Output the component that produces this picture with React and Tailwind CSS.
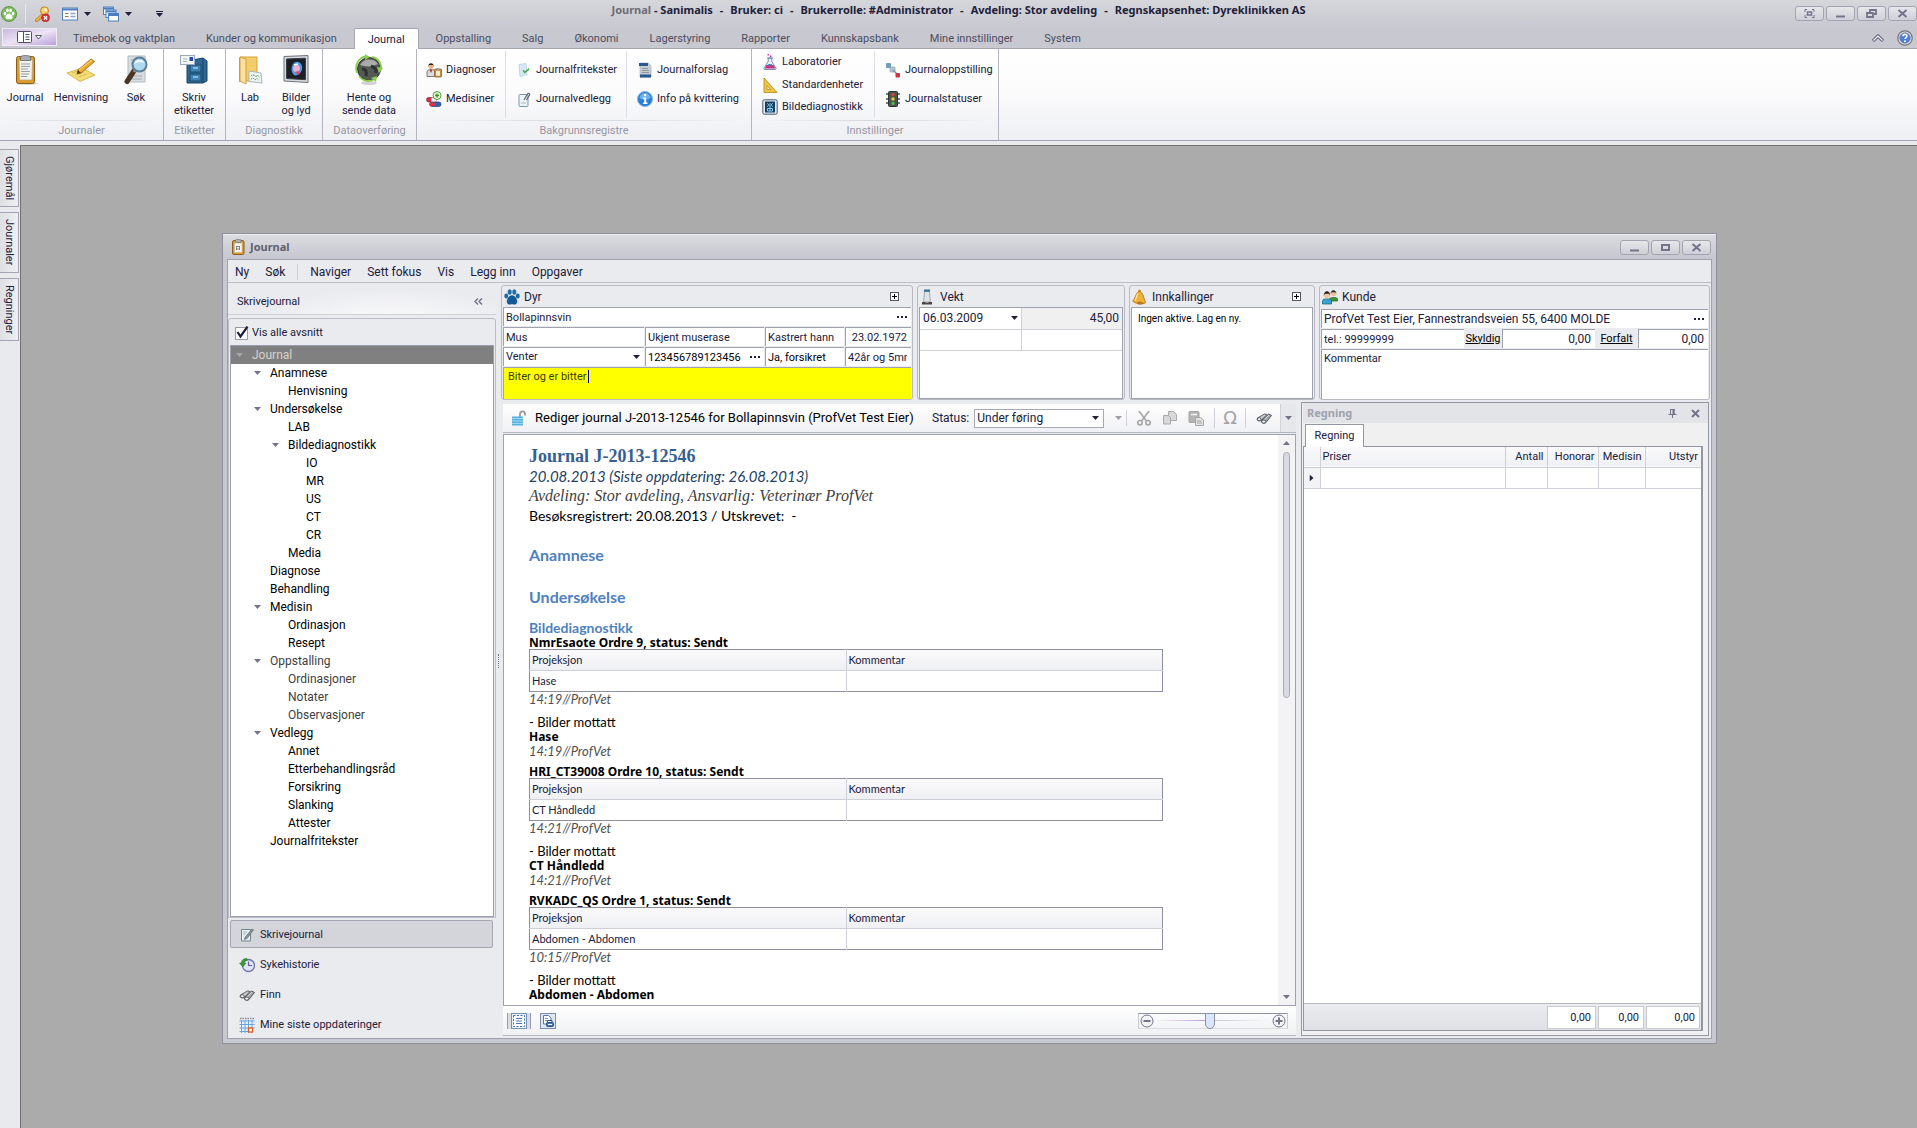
import { useState } from 'react'

const tabs = [
  'Timebok og vaktplan', 'Kunder og kommunikasjon', 'Journal', 'Oppstalling', 'Salg', 'Økonomi',
  'Lagerstyring', 'Rapporter', 'Kunnskapsbank', 'Mine innstillinger', 'System',
]

const titleParts = [
  'Bruker: ci', 'Brukerrolle: #Administrator', 'Avdeling: Stor avdeling', 'Regnskapsenhet: Dyreklinikken AS',
]

const tree = [
  { label: 'Anamnese', level: 1, open: true },
  { label: 'Henvisning', level: 2 },
  { label: 'Undersøkelse', level: 1, open: true },
  { label: 'LAB', level: 2 },
  { label: 'Bildediagnostikk', level: 2, open: true },
  { label: 'IO', level: 3 },
  { label: 'MR', level: 3 },
  { label: 'US', level: 3 },
  { label: 'CT', level: 3 },
  { label: 'CR', level: 3 },
  { label: 'Media', level: 2 },
  { label: 'Diagnose', level: 1 },
  { label: 'Behandling', level: 1 },
  { label: 'Medisin', level: 1, open: true },
  { label: 'Ordinasjon', level: 2 },
  { label: 'Resept', level: 2 },
  { label: 'Oppstalling', level: 1, open: true, dim: true },
  { label: 'Ordinasjoner', level: 2, dim: true },
  { label: 'Notater', level: 2, dim: true },
  { label: 'Observasjoner', level: 2, dim: true },
  { label: 'Vedlegg', level: 1, open: true },
  { label: 'Annet', level: 2 },
  { label: 'Etterbehandlingsråd', level: 2 },
  { label: 'Forsikring', level: 2 },
  { label: 'Slanking', level: 2 },
  { label: 'Attester', level: 2 },
  { label: 'Journalfritekster', level: 1 },
]

const indent = { 1: 'pl-[18px]', 2: 'pl-[36px]', 3: 'pl-[54px]' }

const orders = [
  { title: 'NmrEsaote Ordre 9, status: Sendt', projection: 'Hase', time: '14:19//ProfVet' },
  { title: 'HRI_CT39008 Ordre 10, status: Sendt', projection: 'CT Håndledd', time: '14:21//ProfVet' },
  { title: 'RVKADC_QS Ordre 1, status: Sendt', projection: 'Abdomen - Abdomen', time: '10:15//ProfVet', last: true },
]

const nav = [
  { label: 'Skrivejournal', icon: 'write' },
  { label: 'Sykehistorie', icon: 'history' },
  { label: 'Finn', icon: 'binoculars' },
  { label: 'Mine siste oppdateringer', icon: 'calendar' },
]

// 16x16 drawings
const small = {
  pawGreen: (
    <>
      <circle cx="8" cy="8" r="7.5" fill="#7dbb5e" stroke="#5c9a45" />
      <ellipse cx="3.9" cy="7.6" rx="1.3" ry="1.8" fill="#fff" />
      <ellipse cx="6.4" cy="4.4" rx="1.3" ry="1.9" fill="#fff" />
      <ellipse cx="9.6" cy="4.4" rx="1.3" ry="1.9" fill="#fff" />
      <ellipse cx="12.1" cy="7.6" rx="1.3" ry="1.8" fill="#fff" />
      <path d="M8 7.5c-2 0-3.6 2.5-3.6 4.1 0 2 2 1.6 3.6 1.6s3.6.4 3.6-1.6C11.6 10 10 7.5 8 7.5z" fill="#fff" />
    </>
  ),
  paw: (
    <g fill="#1c6fae" stroke="#0e4f86" strokeWidth=".4">
      <ellipse cx="2.3" cy="7" rx="1.8" ry="2.3" />
      <ellipse cx="5.7" cy="3" rx="1.8" ry="2.6" />
      <ellipse cx="10.3" cy="3" rx="1.8" ry="2.6" />
      <ellipse cx="13.7" cy="7" rx="1.8" ry="2.3" />
      <path d="M8 6.5c-2.800 0-5 3.500-5 6 0 3 2.800 3.300 5 2.300 2.200 1 5 .7 5-2.300 0-2.500-2.200-6-5-6z" fill="#0f5a97" />
    </g>
  ),
  key: (
    <>
      <path d="M9 7L1.5 13.5V15.500H4l.5-1.500H6v-2h1.500L10.500 9" fill="#f0b43c" stroke="#b97d1d" strokeWidth=".8" />
      <circle cx="10.5" cy="4.8" r="4" fill="#f8cd62" stroke="#c08425" />
      <circle cx="11.5" cy="3.8" r="1.3" fill="#fff" />
      <circle cx="11.5" cy="11.8" r="4" fill="#d8353b" stroke="#a51f27" strokeWidth=".6" />
      <path d="M9.900 10.200l3.200 3.200m0-3.200l-3.200 3.200" stroke="#fff" strokeWidth="1.4" />
    </>
  ),
  form: (
    <>
      <rect x=".5" y="2" width="15" height="12" fill="#fff" stroke="#4d80bd" />
      <path d="M1 3.500h14" stroke="#4d80bd" strokeWidth="2" />
      <path d="M3 7.500h3.500M3 10.500h3.500" stroke="#b36d2b" strokeWidth="1" />
      <path d="M8.500 7.500h5M8.500 10.500h5" stroke="#7ea8d6" strokeWidth="1.5" />
    </>
  ),
  windows: (
    <g fill="#fff" stroke="#4b7fc0">
      <rect x=".5" y="1" width="10" height="7.5" /><path d="M.5 2.500h10" strokeWidth="2" />
      <rect x="3" y="4" width="10" height="7.5" /><path d="M3 5.500h10" strokeWidth="2" />
      <rect x="5.5" y="7.5" width="10" height="7.5" /><path d="M5.500 9h10" strokeWidth="2" />
    </g>
  ),
  doctor: (
    <>
      <path d="M1 14.500V10c0-2 2-2.500 4-2.500s4 .5 4 2.500v4.500z" fill="#d9dde4" stroke="#6c5a52" strokeWidth=".8" />
      <path d="M3.500 8L5 11l1.500-3" fill="#c43b33" />
      <circle cx="5" cy="4.3" r="2.6" fill="#e7b48c" />
      <path d="M2.200 4.500C2 0 8 0 7.800 4.500L7 3H3z" fill="#2b2220" />
      <rect x="8.5" y="7" width="7" height="8" rx=".8" fill="#c98a35" stroke="#8b5a1a" strokeWidth=".7" />
      <rect x="10" y="8.8" width="4" height="5" fill="#f6ead2" />
      <rect x="10.5" y="6" width="3" height="2" fill="#a0a0a0" />
    </>
  ),
  pills: (
    <>
      <rect x=".5" y="6.5" width="10" height="4.5" rx="2.2" fill="#d43543" stroke="#7c1e2c" strokeWidth=".7" />
      <path d="M5.500 6.500h3a2.200 2.200 0 010 4.500h-3z" fill="#f4f4fa" />
      <rect x="4" y="11" width="11" height="4.5" rx="2.2" fill="#2d62b5" stroke="#1c3c7b" strokeWidth=".7" />
      <path d="M4.300 11.400h5v3.700h-3a2 2 0 01-2-3.700z" fill="#d43543" />
      <circle cx="11" cy="4.5" r="4" fill="#e9f7e2" stroke="#4f9e33" />
      <path d="M11 2.500v4M9 4.500h4" stroke="#3f8e24" strokeWidth="1.3" />
    </>
  ),
  freeText: (
    <>
      <path d="M3 2.500l7-1 1 11-7 2z" fill="#d8e8f2" stroke="#b3cfdf" strokeWidth=".8" />
      <path d="M6.500 8.500l2 3L13 8V6L8.800 9.500 8 8z" fill="#3fa546" />
    </>
  ),
  attach: (
    <>
      <rect x="3" y="3.5" width="9" height="12" rx="1" fill="#eef3f7" stroke="#7e99ab" />
      <path d="M8 9l3.500-6c.8-1.400 2.800-.4 2 1L10.500 9" fill="none" stroke="#5b6670" strokeWidth="1.2" />
      <path d="M5 12h5" stroke="#a9bac6" />
    </>
  ),
  proposal: (
    <>
      <path d="M3 1h8l3 3v11H3z" fill="#c7cdd4" stroke="#9aa4ae" strokeWidth=".6" />
      <path d="M2 1h9v3H2z" fill="#27588f" />
      <path d="M3 12.500h11v3H3z" fill="#27588f" />
      <path d="M5 6.500h6M5 8.500h7M5 10.500h7" stroke="#7c8793" strokeWidth=".8" />
    </>
  ),
  info: (
    <>
      <circle cx="8" cy="8" r="7.5" fill="#2b7fd4" stroke="#7db2ea" />
      <path d="M2.500 7a5.500 5 0 0111 0c-3 2-8 2-11 0z" fill="#6cb0f0" />
      <rect x="7" y="3" width="2.2" height="2.2" fill="#fff" />
      <path d="M6 6.500h3.200v5h1.300v1.500H6v-1.500h1.300V8H6z" fill="#fff" />
    </>
  ),
  flask: (
    <>
      <rect x="5.5" y="0" width="1.5" height="1.5" fill="#e238b2" />
      <rect x="8" y="1.5" width="1.5" height="1.5" fill="#b632cf" />
      <path d="M6.200 4v3.500L2 14c-.4.900 0 1.500 1 1.500h10c1 0 1.400-.6 1-1.500L9.800 7.500V4z" fill="#e7eef8" stroke="#6c83a8" strokeWidth=".9" />
      <path d="M4.500 11h7l1.900 3.500H2.800z" fill="#c3367f" />
      <path d="M6.500 10h3l1 1.500h-5z" fill="#3b8bd0" />
      <path d="M5.200 4h5.600" stroke="#6c83a8" />
    </>
  ),
  ruler: (
    <>
      <path d="M2 1v14.500h13z" fill="#efc644" stroke="#b98d1f" strokeWidth=".9" />
      <path d="M5 8.500V12.500h3.700z" fill="#fff8df" stroke="#b98d1f" strokeWidth=".8" />
    </>
  ),
  xray: (
    <>
      <rect x=".8" y=".8" width="14.4" height="14.4" rx="1.5" fill="#e4edf5" stroke="#44586c" />
      <rect x="3" y="2.5" width="10" height="11" fill="#143d62" />
      <path d="M5 4.500c2 0 2 3 0 3M11 4.500c-2 0-2 3 0 3M5.500 9.500h5v2.500h-5zM8 4v8" fill="none" stroke="#8fd0f2" />
    </>
  ),
  chain: (
    <>
      <rect x="1" y="1" width="5" height="5" rx="1" fill="#6f9fbd" />
      <rect x="5" y="5" width="5" height="5" rx="1" fill="#b4c9d6" stroke="#7996a8" strokeWidth=".6" />
      <path d="M8 8l4 4" stroke="#7c93a3" strokeWidth="1.5" />
      <rect x="10.5" y="11" width="4.5" height="4.5" rx="1" fill="#c93545" />
    </>
  ),
  traffic: (
    <>
      <rect x="3.5" y=".5" width="9" height="15" rx="1" fill="#4b5550" stroke="#2b332f" />
      <path d="M13 3h2M13 8h2M13 12h2M1 3h2M1 8h2M1 12h2" stroke="#4b5550" strokeWidth="1.5" />
      <circle cx="8" cy="3.6" r="1.7" fill="#e64034" />
      <circle cx="8" cy="8" r="1.7" fill="#e9c83a" />
      <circle cx="8" cy="12.4" r="1.7" fill="#48c04e" />
    </>
  ),
  clipboard: (
    <>
      <rect x="2.5" y="1.5" width="11.5" height="14" rx="1.5" fill="#d99a33" stroke="#8d5f18" />
      <rect x="4.5" y="4" width="7.5" height="9.5" fill="#f4f3ee" stroke="#b9b29b" strokeWidth=".5" />
      <path d="M6 7.500h4M6 10h4M6.500 7v4M9.500 7v4" stroke="#6b6f77" strokeWidth=".8" />
      <rect x="5.5" y=".5" width="5.5" height="3" rx="1" fill="#aab0b5" stroke="#6f7479" strokeWidth=".6" />
    </>
  ),
  weight: (
    <>
      <path d="M4.500 2.500h5l.8 10.500H3.700z" fill="#dfe4ea" stroke="#8d959e" strokeWidth=".8" />
      <rect x="4" y=".5" width="6" height="2.2" fill="#2e7596" />
      <path d="M2 13h10v2.500H2z" fill="#4d4743" />
      <path d="M5.500 13h3" stroke="#b9bec5" strokeWidth="1.5" />
    </>
  ),
  bell: (
    <>
      <circle cx="7.5" cy="2" r="1.5" fill="#d9921d" />
      <path d="M7.500 2.500c-4 1-3.500 6-6.800 9.500 1 2.500 11 4 13 1.500C11.500 10 12 4 7.500 2.500z" fill="#eeb23a" stroke="#a8690f" strokeWidth=".8" />
      <path d="M6 4.500C4.500 6 4.500 9 3 11.500" stroke="#fbe3a0" strokeWidth="1.4" fill="none" />
      <ellipse cx="8" cy="14" rx="3" ry="1.5" fill="#b87915" />
    </>
  ),
  people: (
    <>
      <path d="M8 12V9.500C8 8 15.500 8 15.500 10v2z" fill="#3e9a35" stroke="#1f5e1b" strokeWidth=".7" />
      <circle cx="11.5" cy="4.6" r="2.5" fill="#efbd95" />
      <path d="M8.700 5C8.400 0 14.600 0 14.300 5l-.8-1.700h-4z" fill="#2a201e" />
      <path d="M.5 15v-3c0-3 9-3 9 0v3z" fill="#36a4cf" stroke="#155f80" strokeWidth=".7" />
      <circle cx="5" cy="6.5" r="2.9" fill="#f4c69f" />
      <path d="M1.800 7C1.500.8 8.500.8 8.200 7l-1-2.200H2.800z" fill="#241b1a" />
    </>
  ),
  lock: (
    <>
      <path d="M9 7V4c0-3.600 5-3.600 5 0v1.500" fill="none" stroke="#9b9b98" strokeWidth="1.8" />
      <rect x="1" y="6.5" width="11" height="9" fill="#5ab3df" />
      <path d="M1 8.500h11M1 11h11M1 13.500h11" stroke="#9bd8f3" />
    </>
  ),
  cut: (
    <g fill="none" stroke="#a6a6a6" strokeWidth="1.6">
      <path d="M3 1l7.500 10M13 1L5.500 11" />
      <circle cx="4" cy="12.7" r="2.2" />
      <circle cx="12" cy="12.7" r="2.2" />
    </g>
  ),
  copy: (
    <g fill="#d8d8d8" stroke="#a9a9a9">
      <path d="M6.500 1.500h5l3 3v6h-8z" />
      <path d="M1.500 5.500h5l2 2v6.500h-7z" />
    </g>
  ),
  paste: (
    <g stroke="#a3a3a3">
      <rect x="1" y="1.5" width="10" height="11" rx="1" fill="#b5b5b5" />
      <path d="M3 4.500h6" stroke="#f1f1f1" strokeWidth="1.5" />
      <path d="M7.500 7.500h5l3 2.500v5.500h-8z" fill="#e2e2e2" />
      <path d="M9 11h4M9 13h5" />
    </g>
  ),
  binoculars: (
    <g stroke="#3f4347" strokeWidth=".8">
      <path d="M1.500 8L8.500 4l2.500.500L5.500 10C3 12 0 10.500 1.500 8z" fill="#c9cdd1" />
      <path d="M5.500 10.500L12.500 4l3 1.500-5.500 7C8 14 4.500 13 5.500 10.500z" fill="#9da3a8" />
      <ellipse cx="3.2" cy="9.2" rx="1.9" ry="1.5" fill="#eef0f2" />
      <ellipse cx="7.8" cy="11.6" rx="2" ry="1.6" fill="#eef0f2" />
      <path d="M8.500 9.500l4.500-4.500" stroke="#e7eaec" />
    </g>
  ),
  write: (
    <>
      <path d="M2.500 2.500h9v11.500h-9z" fill="#e6eff4" stroke="#6f8593" />
      <path d="M6 10.500L13 2l1.500.800L8 11.500 5.500 12.500z" fill="#8c969d" stroke="#59636a" strokeWidth=".7" />
      <path d="M4 5h4M4 7h3" stroke="#a7bcc8" />
    </>
  ),
  history: (
    <>
      <circle cx="9.5" cy="8.5" r="6" fill="#dfe3f8" stroke="#6d72ad" strokeWidth="1.3" />
      <path d="M9.500 4.500v4h3.500" fill="none" stroke="#5b5f9c" strokeWidth="1.2" />
      <path d="M8 1.500C4 1.500 2.500 3.500 2.500 6H.5l3.300 4L7 6H5c0-1.500 1-2.500 3-2.500z" fill="#3f9b35" stroke="#226b1c" strokeWidth=".5" />
    </>
  ),
  calendar: (
    <>
      <rect x="1" y="3" width="13" height="12" fill="#eaf3fb" />
      <path d="M1 1.500h14.500" stroke="#888e96" strokeWidth="1.5" strokeDasharray="1.5 1" />
      <path d="M.5 4h15M.5 7.500h15M.5 11h15M.5 14.500h13M2.500 3v13M6 3v13M9.500 3v13M13 3v13" stroke="#6aa2dc" />
      <rect x="9.5" y="11" width="4" height="4" fill="#fff" stroke="#dd5a23" strokeWidth="1.3" />
    </>
  ),
  pageView: (
    <>
      <rect x=".5" y=".5" width="15" height="15" fill="#eaf2fb" stroke="#7390b5" />
      <rect x="2.5" y="2.5" width="11" height="11" fill="#fff" stroke="#3e6ea8" strokeDasharray="2 1.5" />
      <path d="M5 5.500h6M5 8h6M5 10.500h6" stroke="#4878b4" />
    </>
  ),
  printView: (
    <>
      <rect x=".5" y=".5" width="15" height="15" fill="#dfe8f2" stroke="#7c8fa9" />
      <path d="M3.500 2.500h5l2.500 2.500v6h-7.500z" fill="#fff" stroke="#4a7ab5" />
      <path d="M5 5.500h3M5 7.500h4" stroke="#6f9acb" />
      <path d="M7.500 9.500v-2h4.500v2" fill="#fff" stroke="#264f86" />
      <rect x="6.500" y="9.5" width="7" height="4" rx="1" fill="#4779b7" stroke="#264f86" />
      <path d="M8 11.500h4" stroke="#fff" />
    </>
  ),
  help: (
    <>
      <circle cx="8" cy="8" r="7.2" fill="#e9e9ec" stroke="#71727a" strokeWidth="1.2" />
      <circle cx="8" cy="8" r="5.3" fill="#4a7fe0" stroke="#7b8495" strokeWidth=".8" />
      <path d="M6 6.300c0-2.600 4-2.500 4-.2 0 1.500-2 1.500-2 3" fill="none" stroke="#fff" strokeWidth="1.6" />
      <circle cx="8" cy="11.3" r="1" fill="#fff" />
    </>
  ),
}

// 32x32 drawings
const large = {
  journal: (
    <>
      <ellipse cx="18" cy="29.5" rx="11" ry="1.5" fill="#d5d5da" />
      <rect x="7.5" y="2.5" width="18" height="27" rx="2" fill="#d99a2e" stroke="#8c5d16" />
      <path d="M10 6h13.500l-.5 20H10.500z" fill="#f1f1ee" stroke="#b7a57a" strokeWidth=".7" />
      <path d="M12 10h9M12 12.500h9M12 15h7M12 17.500h9M12 20h8M12 22.500h6" stroke="#9a9da3" />
      <path d="M11.500 3c0-2 10-2 10 0v3.500h-10z" fill="#a9adb1" stroke="#66696d" strokeWidth=".8" />
    </>
  ),
  referral: (
    <>
      <path d="M2 19l15-5 13 7-15 6.500z" fill="#f4dd76" stroke="#cfae3c" strokeWidth=".8" />
      <path d="M7 19l9-3M10 21l9-3M13 23l9-3" stroke="#d7bd55" />
      <path d="M12 20l1-4L26 5l3.500 2.500L16 19z" fill="#f0ab2e" stroke="#a86c12" strokeWidth=".9" />
      <path d="M12 20l1-4 3 3z" fill="#4d3a23" />
      <path d="M14 16L27 6" stroke="#fbdc8a" />
    </>
  ),
  search: (
    <>
      <path d="M8 2h17v26H8z" fill="#d9dde2" stroke="#b5bac1" />
      <path d="M11 6h11M11 9h11M11 22h11M11 25h11" stroke="#b5bac1" strokeWidth="1.5" />
      <path d="M14 17L7 27.500" stroke="#4c3424" strokeWidth="5" strokeLinecap="round" />
      <path d="M16 15l-2 3" stroke="#8e8e90" strokeWidth="3" />
      <circle cx="19.5" cy="10.5" r="7" fill="#a9d8f3" fillOpacity=".9" stroke="#5d7f98" strokeWidth="2" />
      <path d="M14.500 10c0-5 8-6 10-1-3-1-7-1-10 1z" fill="#eef9ff" />
    </>
  ),
  labels: (
    <>
      <path d="M9 7l16-3 4 3v20l-4 2H9z" fill="#2d6794" stroke="#1c4464" />
      <path d="M25 4v25" stroke="#1c4464" />
      <rect x="12" y="11" width="11" height="7" fill="#3d82b3" stroke="#1d4a6e" />
      <rect x="12" y="20" width="11" height="7" fill="#3d82b3" stroke="#1d4a6e" />
      <path d="M15 14h5M15 23h5" stroke="#9ecdf0" strokeWidth="1.5" />
      <rect x="2.5" y="1.5" width="14" height="9" fill="#f2f5fa" stroke="#9aa9c0" />
      <rect x="11.5" y="3" width="3.5" height="4" fill="#2849b8" />
      <path d="M5 5h4M5 7.500h4" stroke="#a7b1c4" />
    </>
  ),
  lab: (
    <>
      <path d="M5 4l4-1.500V26l-4 2z" fill="#c58a27" />
      <path d="M6 3h17v24H6z" fill="#f3cc6c" stroke="#d5a23a" />
      <path d="M6 3l6 2v25l-6-3z" fill="#fbe2a0" stroke="#d5a23a" />
      <path d="M15 17l12 2 1 10-13-1.500z" fill="#eef6f3" stroke="#a2b9c0" />
      <path d="M17 21l1.500 1 1.500-1.500 2 2.500 1.500-2 2 2.500M17 25l2-1 2 2 2-1.500 2 2" fill="none" stroke="#3fa055" strokeDasharray="1.5 1" />
    </>
  ),
  images: (
    <>
      <path d="M4 2.500l24-1v27L4 27z" fill="#d7d9dc" stroke="#6f7277" />
      <path d="M6.500 5l19-.8v21.500L6.500 24.500z" fill="#1d1f27" stroke="#3c3f45" />
      <path d="M13 10c3-4 8-2 9 2s-2 9-6 9.500-6-7-3-11.500z" fill="#4a9de0" />
      <path d="M14 12c2-2 6-1 6 2s-3 5-5 4-3-4-1-6z" fill="#f3aed0" />
      <path d="M15 18l3-1 2 2-2 2z" fill="#e0446b" />
      <path d="M14 11l4-1" stroke="#fff" strokeWidth="1.5" />
    </>
  ),
  globe: (
    <>
      <ellipse cx="16" cy="29" rx="8" ry="2" fill="#cfd2d0" />
      <circle cx="16" cy="15" r="11.5" fill="#555956" stroke="#2a2d2b" />
      <path d="M7 11c4-7 14-7 18-1-6 3-12 3-18 1z" fill="#a9adaa" />
      <path d="M9 15c4 0 5 3 4 7M18 12c3 1 6 3 5 7" fill="none" stroke="#2f322f" strokeWidth="3" />
      <g fill="none" stroke="#8ccc50" strokeWidth="1.8">
        <path d="M4 19C1 10 7 3 13 2.500M19 3c7 1 10 8 9 13M6 22c4 5 9 6 14 4" />
      </g>
      <path d="M12 0l5 3-5 3zM30 14l-4 5-2-6zM24 22l-1 6-5-4z" fill="#8ccc50" />
    </>
  ),
}

function Icon({ name, big }) {
  return big ? (
    <svg className="size-8 shrink-0" viewBox="0 0 32 32" aria-hidden="true">{large[name]}</svg>
  ) : (
    <svg className="size-4 shrink-0" viewBox="0 0 16 16" aria-hidden="true">{small[name]}</svg>
  )
}

function Arrow({ className = 'text-[#20203a]' }) {
  return (
    <svg className={`h-1 w-[7px] shrink-0 ${className}`} viewBox="0 0 7 4" aria-hidden="true">
      <path d="M0 0h7L3.500 4z" fill="currentColor" />
    </svg>
  )
}

function WindowButton({ label, children }) {
  return (
    <button
      type="button"
      aria-label={label}
      className="flex h-[15px] w-[29px] items-center justify-center rounded-[3px] border border-[#a3a4b0] bg-linear-to-b from-[#e6e7ea] to-[#cfd0d7] text-[#73748a]"
    >
      <svg className="h-[9px] w-[11px]" viewBox="0 0 11 9" fill="none" stroke="currentColor" strokeWidth="2">
        {children}
      </svg>
    </button>
  )
}

const glyphs = {
  min: <path d="M1 7.500h9" />,
  max: <rect x="2" y="2" width="7" height="5" />,
  restore: <path d="M4 3V1h6v4H8M1 4h6v4H1z" strokeWidth="1.8" />,
  close: <path d="M1.500 1l8 7M9.500 1l-8 7" />,
  full: <><path d="M1 3V.5h2M8 .5h2V3M1 6v2.500h2M8 8.500h2V6" strokeWidth="1" /><rect x="3.5" y="3" width="4" height="3" strokeWidth="1.5" /></>,
}

function BigButton({ icon, label, width }) {
  return (
    <button type="button" className={`flex flex-col items-center justify-start pt-[5px] leading-[13px] whitespace-pre ${width}`}>
      <Icon name={icon} big />
      <span className="mt-[5px] text-center">{label}</span>
    </button>
  )
}

function RibbonGroup({ title, width, children }) {
  return (
    <section className={`flex flex-col border-r border-[#b4b5bf] ${width}`} aria-label={title}>
      <div className="flex h-[74px]">{children}</div>
      <div className="mx-2 h-px bg-linear-to-r from-transparent via-[#d5d6dc] to-transparent" />
      <div className="flex-1 text-center leading-[19px] text-[#9697a3]">{title}</div>
    </section>
  )
}

function SmallColumn({ items, width, divider }) {
  return (
    <div className={`my-[2px] flex flex-col justify-around ${width} ${divider ? 'border-r border-[#dddee3]' : ''} ${items.length === 2 ? 'py-[5px]' : ''}`}>
      {items.map(([icon, label]) => (
        <button key={label} type="button" className="flex items-center gap-1 whitespace-nowrap">
          <Icon name={icon} />
          {label}
        </button>
      ))}
    </div>
  )
}

function Ribbon() {
  const [active, setActive] = useState('Journal')

  return (
    <header>
      {/* Title bar */}
      <div className="relative flex h-7 items-center bg-linear-to-b from-[#d6d7db] to-[#c8c9d0] pl-px">
        <Icon name="pawGreen" />
        <span className="mx-2 h-5 w-px bg-[#e6e7ea]" />
        <button type="button" aria-label="Logg ut"><Icon name="key" /></button>
        <button type="button" aria-label="Skjema" className="ml-3 flex items-center gap-[6px]"><Icon name="form" /><Arrow /></button>
        <button type="button" aria-label="Vinduer" className="ml-3 flex items-center gap-[6px]"><Icon name="windows" /><Arrow /></button>
        <button type="button" aria-label="Tilpass" className="ml-6 flex flex-col gap-px">
          <span className="h-px w-[7px] bg-[#20203a]" />
          <Arrow />
        </button>
        <h1 className="absolute inset-x-0 top-[3px] flex justify-center gap-[7px] font-[family-name:'Noto_Sans',sans-serif] text-[11px] leading-[14px] font-bold whitespace-pre text-[#20203a]">
          <span><span className="text-[#6b6b78]">Journal</span> - Sanimalis</span>
          {titleParts.map(part => (
            <span key={part} className="flex gap-[7px]"><span>-</span>{part}</span>
          ))}
        </h1>
        <div className="absolute top-[6px] right-0 flex gap-[2px]">
          <WindowButton label="Fullskjerm">{glyphs.full}</WindowButton>
          <WindowButton label="Minimer">{glyphs.min}</WindowButton>
          <WindowButton label="Gjenopprett">{glyphs.restore}</WindowButton>
          <WindowButton label="Lukk">{glyphs.close}</WindowButton>
        </div>
      </div>

      {/* Tabs */}
      <nav className="flex h-[21px] items-stretch gap-px border-b border-[#a5a6b2] bg-[#c7c8d0]">
        <button type="button" aria-label="Meny" className="ml-[2px] flex h-[18px] w-[55px] items-center justify-center gap-[3px] border border-[#f0eaf5] bg-linear-to-br from-[#c9b8e0] via-[#ece3f4] to-[#b9a2d8]">
          <svg className="h-3 w-[15px]" viewBox="0 0 15 12" fill="#fff" stroke="#4e4e5e">
            <rect x=".5" y=".5" width="14" height="11" rx="1" />
            <path d="M6.500 1v10M8.500 3.500h4M8.500 6h4M8.500 8.500h4" />
          </svg>
          <svg className="h-[5px] w-[7px]" viewBox="0 0 7 5" fill="#fff" stroke="#5a5a6a"><path d="M.5.500h6l-3 3.500z" /></svg>
        </button>
        {tabs.map(tab => (
          <button
            key={tab}
            type="button"
            onClick={() => setActive(tab)}
            className={tab === active
              ? 'relative z-10 mx-px -mb-px rounded-t-xs border border-b-0 border-[#a5a6b2] bg-white px-[13px] pt-[2px] text-[#20203a]'
              : 'px-[15px] pt-[2px] text-[#4c4c60]'}
          >
            {tab}
          </button>
        ))}
        <span className="flex-1" />
        <button type="button" aria-label="Skjul båndet" className="mr-3">
          <svg className="h-2 w-3" viewBox="0 0 12 8" fill="none">
            <path d="M1 7l5-5 5 5" stroke="#6a6b80" strokeWidth="3.4" />
            <path d="M1.500 6.500L6 2l4.500 4.500" stroke="#f4f4f7" strokeWidth="1.2" />
          </svg>
        </button>
        <button type="button" aria-label="Hjelp" className="mr-1"><Icon name="help" /></button>
      </nav>

      {/* Groups */}
      <div className="flex h-[92px] border-b border-[#a5a6b2] bg-linear-to-b from-white via-[#fbfbfc] to-[#eeeff3]">
        <RibbonGroup title="Journaler" width="w-[164px]">
          <BigButton icon="journal" label="Journal" width="w-[50px]" />
          <BigButton icon="referral" label="Henvisning" width="w-[62px]" />
          <BigButton icon="search" label="Søk" width="w-[48px]" />
        </RibbonGroup>
        <RibbonGroup title="Etiketter" width="w-[62px]">
          <BigButton icon="labels" label={'Skriv\netiketter'} width="w-[60px]" />
        </RibbonGroup>
        <RibbonGroup title="Diagnostikk" width="w-[97px]">
          <BigButton icon="lab" label="Lab" width="w-[48px]" />
          <BigButton icon="images" label={'Bilder\nog lyd'} width="w-[44px]" />
        </RibbonGroup>
        <RibbonGroup title="Dataoverføring" width="w-[94px]">
          <BigButton icon="globe" label={'Hente og\nsende data'} width="w-[92px]" />
        </RibbonGroup>
        <RibbonGroup title="Bakgrunnsregistre" width="w-[335px]">
          <SmallColumn width="ml-[9px] w-[80px]" divider items={[['doctor', 'Diagnoser'], ['pills', 'Medisiner']]} />
          <SmallColumn width="ml-[10px] w-[111px]" divider items={[['freeText', 'Journalfritekster'], ['attach', 'Journalvedlegg']]} />
          <SmallColumn width="ml-[10px] w-[110px]" items={[['proposal', 'Journalforslag'], ['info', 'Info på kvittering']]} />
        </RibbonGroup>
        <RibbonGroup title="Innstillinger" width="w-[247px]">
          <SmallColumn width="ml-[10px] w-[113px]" divider items={[['flask', 'Laboratorier'], ['ruler', 'Standardenheter'], ['xray', 'Bildediagnostikk']]} />
          <SmallColumn width="ml-[10px] w-[110px]" items={[['chain', 'Journaloppstilling'], ['traffic', 'Journalstatuser']]} />
        </RibbonGroup>
      </div>
    </header>
  )
}

function Panel({ icon, title, expand, width, children }) {
  return (
    <section className={`flex h-[115px] flex-col rounded-[3px] border border-[#b9bac4] px-px ${width}`}>
      <div className="flex h-[21px] shrink-0 items-center gap-1 pl-px">
        <Icon name={icon} />
        <h3 className="flex-1 text-[12px]">{title}</h3>
        {expand && (
          <button type="button" aria-label={`Utvid ${title}`} className="mr-3 flex size-[9px] items-center justify-center border border-[#55555f] bg-white">
            <svg className="size-[5px]" viewBox="0 0 5 5" stroke="#000"><path d="M0 2.500h5M2.500 0v5" /></svg>
          </button>
        )}
      </div>
      {children}
    </section>
  )
}

function Field({ label, value, width = '', className = '', children }) {
  return (
    <div className={`flex h-[19px] items-center overflow-hidden border-t border-l border-[#a0a1ae] bg-white pr-1 ${width}`}>
      <input aria-label={label} defaultValue={value} className={`h-full w-full min-w-0 bg-transparent pl-[2px] outline-none ${className}`} />
      {children}
    </div>
  )
}

function Dots() {
  return (
    <button type="button" aria-label="Velg" className="flex shrink-0 gap-[2px]">
      <span className="size-[2px] bg-[#20203a]" />
      <span className="size-[2px] bg-[#20203a]" />
      <span className="size-[2px] bg-[#20203a]" />
    </button>
  )
}

function PatientPanels() {
  return (
    <div className="flex gap-1">
      <Panel icon="paw" title="Dyr" expand width="w-[412px]">
        <div className="flex flex-1 flex-col gap-px">
          <Field label="Navn" value="Bollapinnsvin"><Dots /></Field>
          <div className="flex gap-px">
            <Field label="Art" value="Mus" width="w-[141px]" />
            <Field label="Rase" value="Ukjent muserase" width="w-[119px]" />
            <Field label="Kjønn" value="Kastrert hann" width="w-[79px]" />
            <Field label="Født" value="23.02.1972" width="flex-1" className="text-right" />
          </div>
          <div className="flex gap-px">
            <div className="flex h-[19px] w-[141px] items-center border-t border-l border-[#a0a1ae] bg-white pr-1">
              <select aria-label="Tilstand" className="h-full flex-1 appearance-none pl-[2px] outline-none">
                <option>Venter</option>
              </select>
              <Arrow />
            </div>
            <Field label="Chipnummer" value="123456789123456" width="w-[119px]" className="text-black"><Dots /></Field>
            <Field label="Forsikring" value="Ja, forsikret" width="w-[79px]" className="text-black" />
            <Field label="Alder" value="42år og 5mnd" width="flex-1" />
          </div>
          <div className="relative flex flex-1 border-t border-l border-[#a0a1ae]">
            <textarea aria-label="Merknad" defaultValue="Biter og er bitter" className="w-full resize-none bg-[#ffff00] pt-[2px] pl-1 leading-[14px] text-[#3a3a10] caret-transparent outline-none" />
            <span className="absolute top-[2px] left-[84px] h-[13px] w-px bg-[#0000c0]" />
          </div>
        </div>
      </Panel>

      <Panel icon="weight" title="Vekt" width="w-[208px]">
        <div className="flex-1 border border-[#a0a1ae] bg-white">
          <table className="w-full table-fixed text-[12px]">
            <tbody>
              <tr className="h-[21px] border-b border-[#cfd0d7]">
                <td className="border-r border-[#cfd0d7] px-[3px]">
                  <span className="flex items-center justify-between">06.03.2009<Arrow /></span>
                </td>
                <td className="bg-[#f0f0f1] px-[3px] text-right">45,00</td>
              </tr>
              <tr className="h-[21px] border-b border-[#cfd0d7]">
                <td className="border-r border-[#cfd0d7]" />
                <td />
              </tr>
            </tbody>
          </table>
        </div>
      </Panel>

      <Panel icon="bell" title="Innkallinger" expand width="w-[186px]">
        <div className="flex-1 border border-[#a0a1ae] bg-white px-[6px] py-1 text-[10px] leading-[14px] text-black">
          Ingen aktive. Lag en ny.
        </div>
      </Panel>

      <Panel icon="people" title="Kunde" width="flex-1">
        <div className="mt-[2px] flex flex-1 flex-col gap-px">
          <Field label="Kunde" value="ProfVet Test Eier, Fannestrandsveien 55, 6400 MOLDE" className="text-[12px]"><Dots /></Field>
          <div className="flex items-center justify-between">
            <Field label="Telefon" value="tel.: 99999999" width="w-[143px]" />
            <a href="#skyldig" className="text-black underline">Skyldig</a>
            <Field label="Skyldig beløp" value="0,00" width="w-[93px]" className="text-right text-[12px]" />
            <a href="#forfalt" className="px-1 text-black underline">Forfalt</a>
            <Field label="Forfalt beløp" value="0,00" width="w-[70px]" className="text-right text-[12px]" />
          </div>
          <textarea aria-label="Kommentar" defaultValue="Kommentar" className="flex-1 resize-none border-t border-l border-[#a0a1ae] bg-white pt-[2px] pl-[2px] leading-[14px] outline-none" />
        </div>
      </Panel>
    </div>
  )
}

function Sidebar() {
  const [selected, setSelected] = useState('Skrivejournal')

  return (
    <aside className="flex w-[268px] shrink-0 flex-col">
      <div className="flex h-8 items-center justify-between border-b border-[#d0d1d8] bg-[radial-gradient(ellipse_at_60%_120%,#fafafb,#eaebef_60%)] px-[9px] pt-[6px]">
        <h2>Skrivejournal</h2>
        <button type="button" aria-label="Fold sammen" className="mr-1">
          <svg className="size-[9px]" viewBox="0 0 9 9" fill="none" stroke="#6f7084" strokeWidth="1.4"><path d="M4 1.500l-3 3 3 3M8 1.500l-3 3 3 3" /></svg>
        </button>
      </div>

      <div className="mt-[3px] flex flex-1 flex-col rounded-t-[3px] border border-[#bcbdc7] px-px">
        <label className="flex h-[26px] items-center gap-1 px-[5px] pt-[2px]">
          <span className="relative size-[13px]">
            <input type="checkbox" defaultChecked className="peer block size-[13px] appearance-none border border-[#9a9ba8] bg-white" />
            <svg className="pointer-events-none absolute -top-px left-px hidden size-[13px] peer-checked:block" viewBox="0 0 13 13" fill="none" stroke="#20203a" strokeWidth="2.2">
              <path d="M1.500 6l3 4.500L11.500.500" />
            </svg>
          </span>
          Vis alle avsnitt
        </label>
        <ul className="flex-1 border border-[#9d9eab] bg-white text-[12px] leading-[18px] text-black">
          <li className="flex h-[18px] items-center bg-[#808080] pl-[5px] text-[#d8d4cc]">
            <span className="w-4"><Arrow className="text-[#a8a8a8]" /></span>
            Journal
          </li>
          {tree.map(({ label, level, open, dim }) => (
            <li key={label} className={`flex h-[18px] items-center ${indent[level]} ${dim ? 'text-[#404040]' : ''}`}>
              <span className="flex w-[21px] pl-[5px]">{open && <Arrow className="text-[#73748a]" />}</span>
              {label}
            </li>
          ))}
        </ul>
      </div>

      <nav className="mt-[2px] flex flex-col gap-[2px] pr-[3px] pl-[2px]">
        {nav.map(({ label, icon }) => (
          <button
            key={label}
            type="button"
            onClick={() => setSelected(label)}
            className={`flex h-7 items-center gap-[5px] rounded-xs border pt-px pl-2 ${selected === label ? 'border-[#a5a6b2] bg-[#d4d5da]' : 'border-transparent'}`}
          >
            <Icon name={icon} />
            {label}
          </button>
        ))}
      </nav>
    </aside>
  )
}

function Toolbar() {
  return (
    <div className="flex h-[29px] items-center border-b border-[#b5b6c0] bg-linear-to-b from-white to-[#f0f1f4] pl-2 text-[12px]">
      <Icon name="lock" />
      <span className="ml-2 text-[13px] text-black">Rediger journal J-2013-12546 for Bollapinnsvin (ProfVet Test Eier)</span>
      <span className="flex-1" />
      <label htmlFor="status" className="mr-[5px]">Status:</label>
      <span className="flex h-[19px] w-[130px] items-center border border-[#a8a9b5] bg-white pr-1">
        <select id="status" className="flex-1 appearance-none pl-[2px] outline-none">
          <option>Under føring</option>
        </select>
        <Arrow />
      </span>
      <span className="mr-1 ml-[11px]"><Arrow className="text-[#9d9ea8]" /></span>
      <div className="flex items-center gap-[10px]">
        <button type="button" aria-label="Klipp ut" className="border-l border-[#d0d1d8] pl-[9px]"><Icon name="cut" /></button>
        <button type="button" aria-label="Kopier"><Icon name="copy" /></button>
        <button type="button" aria-label="Lim inn"><Icon name="paste" /></button>
        <button type="button" aria-label="Symbol" className="border-x border-[#d0d1d8] px-2 font-[family-name:'DejaVu_Sans',sans-serif] text-[18px] leading-5 text-[#a3a3a3]">Ω</button>
        <button type="button" aria-label="Søk"><Icon name="binoculars" /></button>
      </div>
      <button type="button" aria-label="Flere valg" className="ml-2 flex h-full w-4 items-center justify-center border-l border-[#d0d1d8] bg-[#e6e7eb]">
        <Arrow className="text-[#73748a]" />
      </button>
    </div>
  )
}

function Order({ title, projection, time, last }) {
  return (
    <section className="mb-[6px]">
      <h5 className="pt-px font-[family-name:'Noto_Sans',sans-serif] text-[12px] leading-[12px] font-bold">{title}</h5>
      <table className="w-full max-w-[634px] table-fixed border border-[#8f909e] text-left text-[11px] text-[#20203a]">
        <thead>
          <tr className="h-5 border-b border-[#cfd0d7] bg-linear-to-b from-[#fafafb] to-[#eff0f3]">
            <th className="border-r border-[#cfd0d7] px-[2px] font-normal">Projeksjon</th>
            <th className="px-[2px] font-normal">Kommentar</th>
          </tr>
        </thead>
        <tbody>
          <tr className="h-5">
            <td className="border-r border-[#cfd0d7] px-[2px]">{projection}</td>
            <td />
          </tr>
        </tbody>
      </table>
      <p className="text-[13px] leading-[15px] text-[#505050] italic">{time}</p>
      <p className="mt-[7px] text-[13px] leading-4">- Bilder mottatt</p>
      <p className="font-[family-name:'Noto_Sans',sans-serif] text-[12px] leading-[14px] font-bold">{projection}</p>
      {!last && <p className="text-[13px] leading-[15px] text-[#505050] italic">{time}</p>}
    </section>
  )
}

function Document() {
  return (
    <div className="mt-px flex min-h-0 flex-1 border border-[#a0a1ae] bg-white">
      <article className="flex-1 overflow-hidden pt-[11px] pl-[25px] font-[family-name:Lato,sans-serif] text-[14px] leading-5 text-black">
        <h2 className="font-[family-name:'Liberation_Serif',serif] text-[18px] font-bold text-[#365f91]">Journal J-2013-12546</h2>
        <p className="text-[15px] text-[#243f60] italic">20.08.2013 (Siste oppdatering: 26.08.2013)</p>
        <p className="font-[family-name:'Liberation_Serif',serif] text-[16px] text-[#404040] italic">Avdeling: Stor avdeling, Ansvarlig: Veterinær ProfVet</p>
        <p className="whitespace-pre">{'Besøksregistrert: 20.08.2013 / Utskrevet:  -'}</p>
        <h3 className="mt-[19px] text-[16px] font-bold text-[#4f81bd]">Anamnese</h3>
        <h3 className="mt-[22px] text-[16px] font-bold text-[#4f81bd]">Undersøkelse</h3>
        <h4 className="mt-[13px] text-[14px] leading-4 font-bold text-[#4f81bd]">Bildediagnostikk</h4>
        {orders.map(order => <Order key={order.title} {...order} />)}
      </article>
      <div className="flex w-[17px] flex-col items-center bg-[#f3f3f6] py-[6px]">
        <Arrow className="rotate-180 text-[#73748a]" />
        <span className="mt-[7px] h-[246px] w-[7px] rounded-full border border-[#a8a9b5] bg-[#d9dae0]" />
        <span className="flex-1" />
        <Arrow className="text-[#73748a]" />
      </div>
    </div>
  )
}

function ZoomBar() {
  return (
    <div className="flex h-[30px] items-center justify-between border-b border-[#b5b6c0] bg-linear-to-b from-white to-[#f0f1f4] px-2">
      <div className="flex gap-[9px]">
        <button type="button" aria-label="Sidevisning" className="-ml-1 border-x border-[#9a9ba8] bg-[#dcdde2] px-[3px]"><Icon name="pageView" /></button>
        <button type="button" aria-label="Utskriftsvisning"><Icon name="printView" /></button>
      </div>
      <div className="flex h-4 w-[150px] items-center border border-t-[#8f909e] border-r-[#c8c9d1] border-b-[#dcdde2] border-l-[#c8c9d1] px-px">
        <button type="button" aria-label="Zoom ut">
          <svg className="size-[14px]" viewBox="0 0 14 14" fill="#f4f4f7" stroke="#73748a"><circle cx="7" cy="7" r="6" /><path d="M3.500 7h7" strokeWidth="2" /></svg>
        </button>
        <input
          type="range"
          aria-label="Zoom"
          defaultValue="47"
          className="h-4 min-w-0 flex-1 appearance-none bg-[linear-gradient(to_right,transparent,#b79ad8_45%,#c8c9d1_50%,transparent)] bg-size-[100%_1px] bg-center bg-no-repeat [&::-webkit-slider-thumb]:h-4 [&::-webkit-slider-thumb]:w-[10px] [&::-webkit-slider-thumb]:appearance-none [&::-webkit-slider-thumb]:rounded-b-[5px] [&::-webkit-slider-thumb]:border [&::-webkit-slider-thumb]:border-[#8f909e] [&::-webkit-slider-thumb]:bg-[#dbe5fb]"
        />
        <button type="button" aria-label="Zoom inn">
          <svg className="size-[14px]" viewBox="0 0 14 14" fill="#f4f4f7" stroke="#73748a"><circle cx="7" cy="7" r="6" /><path d="M3.500 7h7M7 3.500v7" strokeWidth="2" /></svg>
        </button>
      </div>
    </div>
  )
}

function Invoice() {
  return (
    <section className="flex w-[408px] shrink-0 flex-col border border-[#9596a3] bg-[#f0f0f1] pr-[5px] pb-1 pl-px">
      <div className="-mr-[5px] flex h-5 shrink-0 items-center bg-[#e3e4e8] pr-2 pl-1">
        <h2 className="flex-1 font-[family-name:'Noto_Sans',sans-serif] text-[11px] font-bold text-[#a0a1ae]">Regning</h2>
        <button type="button" aria-label="Fest" className="mr-[14px]">
          <svg className="size-[9px]" viewBox="0 0 9 9" stroke="#73748a" fill="none"><path d="M2.500 0v5M2.500.500h4M6 0v5M.5 5.500h8M4.500 5.500V9" /><path d="M5.500 0v5" strokeWidth="2" /></svg>
        </button>
        <button type="button" aria-label="Lukk">
          <svg className="size-[9px]" viewBox="0 0 9 9" stroke="#73748a" strokeWidth="2"><path d="M1 1l7 7M8 1L1 8" /></svg>
        </button>
      </div>
      <div className="flex pt-px pl-[2px]">
        <button type="button" className="relative z-10 -mb-px h-[23px] w-[59px] border border-b-0 border-[#9596a3] bg-white">Regning</button>
      </div>
      <div className="flex flex-1 flex-col border border-r-2 border-[#9596a3] bg-white">
        <table className="w-full table-fixed">
          <thead>
            <tr className="h-5 border-b border-[#cfd0d7] bg-linear-to-b from-[#fafafb] to-[#eff0f3]">
              <th className="w-4 border-r border-[#cfd0d7]" />
              <th className="border-r border-[#cfd0d7] px-[2px] text-left font-normal">Priser</th>
              <th className="w-[42px] border-r border-[#cfd0d7] px-[3px] text-right font-normal">Antall</th>
              <th className="w-[51px] border-r border-[#cfd0d7] px-[3px] text-right font-normal">Honorar</th>
              <th className="w-[47px] border-r border-[#cfd0d7] px-[3px] text-right font-normal">Medisin</th>
              <th className="w-[56px] px-[3px] text-right font-normal">Utstyr</th>
            </tr>
          </thead>
          <tbody>
            <tr className="h-[21px] border-b border-[#cfd0d7]">
              <td className="border-r border-[#cfd0d7] bg-[#f3f3f6]"><Arrow className="mx-auto -rotate-90" /></td>
              <td className="border-r border-[#cfd0d7]" />
              <td className="border-r border-[#cfd0d7]" />
              <td className="border-r border-[#cfd0d7]" />
              <td className="border-r border-[#cfd0d7]" />
              <td />
            </tr>
          </tbody>
        </table>
        <div className="flex-1" />
        <div className="flex h-[27px] items-center justify-end gap-[2px] border-t border-[#b9bac4] bg-linear-to-b from-[#ebecef] to-[#dfe0e5] pr-px text-right">
          <output className="h-[23px] w-[49px] border border-[#c8c9d1] bg-white pr-1 leading-[21px]">0,00</output>
          <output className="h-[23px] w-[46px] border border-[#c8c9d1] bg-white pr-1 leading-[21px]">0,00</output>
          <output className="h-[23px] w-[54px] border border-[#c8c9d1] bg-white pr-1 leading-[21px]">0,00</output>
        </div>
      </div>
    </section>
  )
}

function JournalWindow() {
  return (
    <main className="flex min-w-0 flex-1 flex-col border border-[#8f909c] bg-[#c8c9d0] px-1 pb-1">
      <div className="-mx-1 flex h-[25px] shrink-0 items-center gap-1 border-t border-[#ececf0] bg-linear-to-b from-[#dbdce1] to-[#c6c7ce] pr-[5px] pl-[7px]">
        <Icon name="clipboard" />
        <h2 className="flex-1 font-[family-name:'Noto_Sans',sans-serif] text-[11px] font-bold text-[#5f606e]">Journal</h2>
        <div className="flex gap-[2px]">
          <WindowButton label="Minimer">{glyphs.min}</WindowButton>
          <WindowButton label="Maksimer">{glyphs.max}</WindowButton>
          <WindowButton label="Lukk">{glyphs.close}</WindowButton>
        </div>
      </div>
      <div className="flex min-h-0 flex-1 flex-col border border-[#a0a1ae] bg-[#eaebef]">
        <div className="flex h-[23px] shrink-0 items-center gap-4 border-b border-[#bcbdc7] pt-px pl-[7px] text-[12px]">
          <button type="button">Ny</button>
          <button type="button">Søk</button>
          <span className="-mx-1 h-4 w-px bg-[#cfd0d7]" />
          <button type="button">Naviger</button>
          <button type="button">Sett fokus</button>
          <button type="button">Vis</button>
          <button type="button">Legg inn</button>
          <button type="button">Oppgaver</button>
        </div>
        <div className="flex min-h-0 flex-1">
          <Sidebar />
          <div className="flex w-[5px] shrink-0 items-center justify-center">
            <span className="h-[14px] border-l border-dotted border-[#73748a]" />
          </div>
          <div className="flex min-w-0 flex-1 flex-col pt-[2px] pr-px pb-[2px]">
            <PatientPanels />
            <div className="mt-[2px] flex min-h-0 flex-1 gap-[5px] pr-px pl-[2px]">
              <div className="flex min-w-0 flex-1 flex-col pt-[2px]">
                <Toolbar />
                <Document />
                <ZoomBar />
              </div>
              <Invoice />
            </div>
          </div>
        </div>
      </div>
    </main>
  )
}

export default function App() {
  return (
    <div className="flex h-screen flex-col bg-[#e9eaee] font-[family-name:Roboto,sans-serif] text-[11px] leading-[14px] text-[#20203a]">
      <Ribbon />
      <div className="flex min-h-0 flex-1 pt-1">
        <div className="flex w-5 flex-col items-start gap-[5px] pt-1">
          {['Gjøremål', 'Journaler', 'Regninger'].map(name => (
            <button
              key={name}
              type="button"
              className="flex w-[19px] items-center justify-center border border-l-0 border-[#a5a6b2] bg-linear-to-r from-[#dfe0e4] to-[#eeeff2] py-[6px]"
            >
              <span className="text-[11px] leading-[14px] [writing-mode:vertical-rl]">{name}</span>
            </button>
          ))}
        </div>
        <div className="flex min-w-0 flex-1 border-t border-l border-[#707070] bg-[#ababab] pt-[87px] pr-[200px] pb-[84px] pl-[201px]">
          <JournalWindow />
        </div>
      </div>
    </div>
  )
}
